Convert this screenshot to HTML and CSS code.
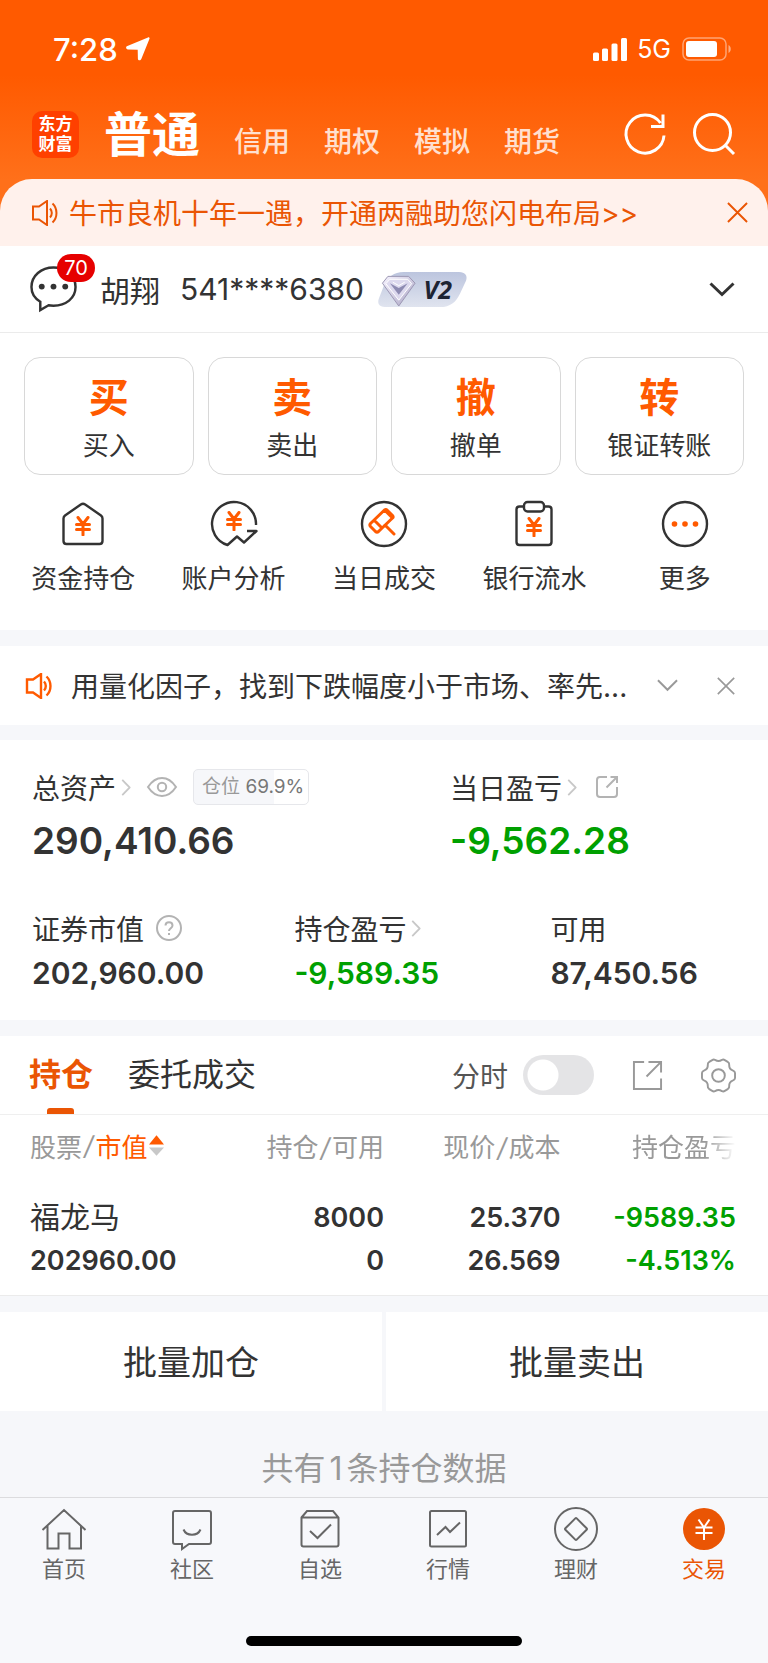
FILE: index.html
```html
<!DOCTYPE html>
<html lang="zh-CN">
<head>
<meta charset="utf-8">
<meta name="viewport" content="width=device-width, initial-scale=1">
<title>交易</title>
<link rel="stylesheet" href="styles.css">
</head>
<body>
<svg class="sprite" aria-hidden="true">
  <symbol id="yen" viewBox="0 0 16 20"><path d="M3 1.500 8 8l5-6.500M8 8v11M1.500 8.500h13M1.500 13.500h13"/></symbol>
  <symbol id="speaker" viewBox="0 0 28 26"><path d="M2 6.500h6L16 1v24L8 19.500H2z"/><path d="M19 8.500c2.400 2.500 2.400 6.500 0 9M21.500 3.500c5.300 5 5.300 14 0 19"/></symbol>
  <symbol id="cross" viewBox="0 0 22 22"><path d="m1 1 20 20M21 1 1 21"/></symbol>
  <symbol id="angle" viewBox="0 0 10 18"><path d="m1 1 8 8-8 8"/></symbol>
</svg>

<header class="top">
  <div class="status">
    <span class="status-time">7:28</span>
    <svg class="status-loc" viewBox="0 0 24 24"><path d="M22 .4c1-.4 1.800.4 1.500 1.400L15.300 22c-.8 2-3.300 1.700-3.400-.3l-.2-9L1.900 12.400c-2-.1-2.500-2.500-.5-3.300z" fill="#fff"/></svg>
    <svg class="status-signal" viewBox="0 0 34 23"><g fill="#fff"><rect x="0" y="14.500" width="6" height="8.500" rx="1.500"/><rect x="9" y="10.500" width="6" height="12.500" rx="1.500"/><rect x="18.500" y="5.500" width="6" height="17.500" rx="1.500"/><rect x="28" y="0" width="6" height="23" rx="1.500"/></g></svg>
    <span class="status-net">5G</span>
    <svg class="status-battery" viewBox="0 0 50 24"><rect x="1" y="1" width="43" height="22" rx="6" fill="none" stroke="#fff" stroke-opacity=".45" stroke-width="1.500"/><rect x="4" y="4" width="31" height="16" rx="3" fill="#fff"/><path d="M46.500 8c3 1.500 3 6.500 0 8z" fill="#fff" fill-opacity=".5"/></svg>
  </div>
  <div class="head">
    <a class="logo" href="#"><span>东方</span><span>财富</span></a>
    <nav class="modes">
      <a class="mode mode-on" href="#">普通</a>
      <a class="mode" href="#">信用</a>
      <a class="mode" href="#">期权</a>
      <a class="mode" href="#">模拟</a>
      <a class="mode" href="#">期货</a>
    </nav>
    <div class="head-tools">
      <button class="bare" aria-label="刷新"><svg class="i-head" viewBox="0 0 42 42"><path d="M36.500 10A19 19 0 1 0 40 22.500M39 1.500v12H27"/></svg></button>
      <button class="bare" aria-label="搜索"><svg class="i-head" viewBox="0 0 42 42"><circle cx="19.500" cy="19.500" r="18"/><path d="m32 32 9 9"/></svg></button>
    </div>
  </div>
</header>

<section class="banner">
  <svg class="i-speaker" viewBox="0 0 28 26"><use href="#speaker"/></svg>
  <a class="banner-text" href="#">牛市良机十年一遇，开通两融助您闪电布局&gt;&gt;</a>
  <button class="bare" aria-label="关闭"><svg class="i-close" viewBox="0 0 22 22"><use href="#cross"/></svg></button>
</section>

<section class="account">
  <button class="bare chat" aria-label="消息">
    <svg class="i-chat" viewBox="0 0 48 48"><path d="M10.500 36.500C4.500 33 1.500 27.500 1.500 21.500 1.500 10 11.500 1.500 24 1.500S46.500 10 46.500 21.500 36.500 40.500 24 40.500c-1.800 0-3.500 0-5-.4L10.500 45z" fill="none" stroke="#333" stroke-width="2.500"/><g fill="#333"><circle cx="12" cy="21" r="3"/><circle cx="24" cy="21" r="3"/><circle cx="36" cy="21" r="3"/></g></svg>
    <span class="chat-count">70</span>
  </button>
  <span class="account-name">胡翔</span>
  <span class="account-no">541****6380</span>
  <span class="vip">
    <svg class="vip-bg" viewBox="0 0 90 36" preserveAspectRatio="none"><defs><linearGradient id="vg" x1="0" y1="0" x2="0" y2="1"><stop offset="0" stop-color="#bcc5de"/><stop offset="1" stop-color="#e0e4ef"/></linearGradient><linearGradient id="dg" x1="0" y1="0" x2="1" y2="1"><stop offset="0" stop-color="#f7f4ff"/><stop offset="1" stop-color="#aaa4c4"/></linearGradient></defs><path d="M26 0h56c6 0 9 4 7 9l-6 13c-4 9-10 14-20 14H7c-6 0-8-4-6-9l5-13C10 5 16 0 26 0z" fill="url(#vg)"/><path d="M10 4.500h21l6.500 7L21 35 4.500 11.500z" fill="url(#dg)" stroke="#9b96b2"/><path d="M12 7.500h18l4 4.500-13 17-13-17z" fill="#ddd9ee" stroke="#fff"/><path d="m12 11.500 9 5 9-5-9 12z" fill="#8e8bb2"/><path d="m15 10.500 6 3.500 6-3.500" fill="none" stroke="#fff"/></svg>
    <span class="vip-text">V2</span>
  </span>
  <button class="bare account-more" aria-label="展开"><svg class="i-down" viewBox="0 0 26 15"><path d="m1.500 1.500 11.500 11 11.500-11" fill="none" stroke="#333" stroke-width="3"/></svg></button>
</section>

<section class="actions">
  <button class="act"><strong>买</strong><span>买入</span></button>
  <button class="act"><strong>卖</strong><span>卖出</span></button>
  <button class="act"><strong>撤</strong><span>撤单</span></button>
  <button class="act"><strong>转</strong><span>银证转账</span></button>
</section>

<nav class="tools">
  <a class="tool" href="#"><svg class="i-tool" viewBox="0 0 48 48"><path d="M21.800 4.500q2.200-1.500 4.400 0L42 15.500q1.500 1.200 1.500 3V41q0 3-3 3h-33q-3 0-3-3V18.500q0-1.800 1.500-3z"/><use class="hot" href="#yen" x="16" y="16" width="16" height="20"/></svg>资金持仓</a>
  <a class="tool" href="#"><svg class="i-tool" viewBox="0 0 48 48"><path d="M46 25A22 22 0 1 0 17.500 45L27 36.500l7 6L46.500 31H37"/><use class="hot" href="#yen" x="16" y="11" width="16" height="20"/></svg>账户分析</a>
  <a class="tool" href="#"><svg class="i-tool" viewBox="0 0 48 48"><circle cx="24" cy="24" r="22"/><g class="hot"><path d="M10.500 23.500 24.500 10l8 8-14 13.500q-1.500 1.300-3 0l-5-5q-1.300-1.500 0-3zM24.500 10q1.500-1 3 .5l5 5q1.200 1.500 0 2.500M14 20l8 8M25 25l9 9"/></g></svg>当日成交</a>
  <a class="tool" href="#"><svg class="i-tool" viewBox="0 0 48 48"><path d="M14 6.500H9.500q-3 0-3 3V42q0 3 3 3h29q3 0 3-3V9.500q0-3-3-3H34"/><rect x="14" y="2" width="20" height="9.500" rx="3.500"/><use class="hot" href="#yen" x="16" y="17" width="16" height="20"/></svg>银行流水</a>
  <a class="tool" href="#"><svg class="i-tool" viewBox="0 0 48 48"><circle cx="24" cy="24" r="22"/><g fill="#ff5a00" stroke="none"><circle cx="13.500" cy="24" r="2.800"/><circle cx="24" cy="24" r="2.800"/><circle cx="34.500" cy="24" r="2.800"/></g></svg>更多</a>
</nav>

<section class="notice">
  <svg class="i-speaker" viewBox="0 0 28 26"><use href="#speaker"/></svg>
  <a class="notice-text" href="#">用量化因子，找到下跌幅度小于市场、率先...</a>
  <button class="bare" aria-label="展开"><svg class="i-drop" viewBox="0 0 22 13"><path d="m1 1 10 10L21 1"/></svg></button>
  <button class="bare" aria-label="关闭"><svg class="i-shut" viewBox="0 0 22 22"><use href="#cross"/></svg></button>
</section>

<section class="assets">
  <div class="asset-row asset-main">
    <div>
      <div class="label">总资产<svg class="i-angle" viewBox="0 0 10 18"><use href="#angle"/></svg>
        <svg class="i-eye" viewBox="0 0 30 20"><path d="M1 10C5 4 9.500 1 15 1s10 3 14 9c-4 6-8.500 9-14 9S5 16 1 10z"/><circle cx="15" cy="10" r="4.200"/></svg>
        <span class="ratio">仓位 <b>69.9%</b></span></div>
      <div class="figure">290,410.66</div>
    </div>
    <div>
      <div class="label">当日盈亏<svg class="i-angle" viewBox="0 0 10 18"><use href="#angle"/></svg>
        <svg class="i-share" viewBox="0 0 24 24"><path d="M12 2H5Q2 2 2 5v14q0 3 3 3h14q3 0 3-3v-7M15.500 2H22v6M22 2 11.500 12.500"/></svg></div>
      <div class="figure down">-9,562.28</div>
    </div>
  </div>
  <div class="asset-row asset-sub">
    <div>
      <div class="label">证券市值<svg class="i-help" viewBox="0 0 26 26"><circle cx="13" cy="13" r="12"/><path d="M9.500 10.500c0-4.500 7-4.500 7 0 0 2.500-3.500 3-3.500 5.500M13 18v2"/></svg></div>
      <div class="figure">202,960.00</div>
    </div>
    <div>
      <div class="label">持仓盈亏<svg class="i-angle" viewBox="0 0 10 18"><use href="#angle"/></svg></div>
      <div class="figure down">-9,589.35</div>
    </div>
    <div>
      <div class="label">可用</div>
      <div class="figure">87,450.56</div>
    </div>
  </div>
</section>

<section class="holdings">
  <div class="tabs">
    <a class="tab tab-on" href="#">持仓</a>
    <a class="tab" href="#">委托成交</a>
    <label class="timeshare">分时<input class="switch" type="checkbox" role="switch"></label>
    <button class="bare" aria-label="分享"><svg class="i-export" viewBox="0 0 32 32"><path d="M12.500 2H2v28h28V19M17 2h13v11M30 2 15 17"/></svg></button>
    <button class="bare" aria-label="设置"><svg class="i-gear" viewBox="0 0 36 36"><path d="M11.500 2.200Q13 1 14.500 2Q18 4.200 21.500 2Q23 1 24.500 2.200L27.500 4Q29.300 5 29 7Q28.800 11.500 32.500 12.800Q35 13.800 35 15.500V20.500Q35 22.200 32.500 23.200Q28.800 24.500 29 29Q29.300 31 27.500 32L24.500 33.800Q23 35 21.500 34Q18 31.800 14.500 34Q13 35 11.500 33.800L8.500 32Q6.700 31 7 29Q7.200 24.500 3.500 23.200Q1 22.200 1 20.500V15.500Q1 13.800 3.500 12.800Q7.200 11.500 7 7Q6.700 5 8.500 4z"/><circle cx="18" cy="18" r="6.500"/></svg></button>
  </div>
  <table class="table">
    <thead>
      <tr>
        <th scope="col"><span class="sort">股票<i>/</i><em>市值</em><svg class="i-sort" viewBox="0 0 16 22"><path d="M8 0l8 10H0z" fill="#ff5a00"/><path d="M8 22l8-9H0z" fill="#c8c8c8"/></svg></span></th>
        <th scope="col">持仓<i>/</i>可用</th>
        <th scope="col">现价<i>/</i>成本</th>
        <th scope="col"><span class="fade">持仓盈亏</span></th>
      </tr>
    </thead>
    <tbody>
      <tr>
        <td><span class="stock">福龙马</span><span>202960.00</span></td>
        <td><span>8000</span><span>0</span></td>
        <td><span>25.370</span><span>26.569</span></td>
        <td class="down"><span>-9589.35</span><span>-4.513%</span></td>
      </tr>
    </tbody>
  </table>
</section>

<div class="batch">
  <button class="batch-btn">批量加仓</button>
  <button class="batch-btn">批量卖出</button>
</div>
<p class="summary">共有<span class="count">1</span>条持仓数据</p>

<nav class="dock">
  <a class="dock-item" href="#"><svg class="i-dock" viewBox="0 0 46 46"><path d="M1.500 24 23 4l21.500 20M6.500 20v22.500H17.500V27.500h11v15H40V20"/></svg>首页</a>
  <a class="dock-item" href="#"><svg class="i-dock" viewBox="0 0 46 46"><path d="M6 5h34q2 0 2 2v29q0 2-2 2H20l-7 5v-5H6q-2 0-2-2V7q0-2 2-2zM14.500 23.500c3 7 14 7 17 0"/></svg>社区</a>
  <a class="dock-item" href="#"><svg class="i-dock" viewBox="0 0 46 46"><path d="M4.500 11.500 10 5h26l5.500 6.500V38.500q0 2-2 2h-33q-2 0-2-2zM4.500 11.500h37M13 25l7.500 7L34 18.500"/></svg>自选</a>
  <a class="dock-item" href="#"><svg class="i-dock" viewBox="0 0 46 46"><rect x="5" y="5" width="36" height="35.500" rx="1.500"/><path d="m12 29 8.500-8 4.500 5 10-9.500"/></svg>行情</a>
  <a class="dock-item" href="#"><svg class="i-dock" viewBox="0 0 46 46"><circle cx="23" cy="23" r="21"/><rect x="15" y="15" width="16" height="16" rx="1" transform="rotate(45 23 23)"/></svg>理财</a>
  <a class="dock-item dock-on" href="#"><svg class="i-dock" viewBox="0 0 46 46"><circle cx="23" cy="23" r="21" fill="#ea5504" stroke="none"/><path d="m17.500 13.500 5.500 8 5.500-8M23 21.500V34M14.500 21.500h17M14.500 27h17" stroke="#fff"/></svg>交易</a>
</nav>
<div class="home"><span class="home-bar"></span></div>
</body>
</html>
```

FILE: styles.css
```css
* { box-sizing: border-box; }

body {
  margin: 0;
  min-height: 100vh;
  display: flex;
  flex-direction: column;
  background: #f6f7fa;
  color: #333;
  font-family: "Inter", "Noto Sans CJK SC", sans-serif;
  font-size: 28px;
}

a { color: inherit; text-decoration: none; }
button { font: inherit; color: inherit; cursor: pointer; }
svg { display: block; flex: none; fill: none; overflow: visible; }
.sprite { position: absolute; width: 0; height: 0; }
.bare { display: block; padding: 0; border: 0; background: none; }
.down { color: #00a000; }

/* Header */
.top {
  height: 212px;
  margin-bottom: -33px;
  background: linear-gradient(#ff5a00 75px, #ff701a 180px);
  color: #fff;
}
.status { display: flex; align-items: center; height: 98px; padding: 0 36px 0 53px; }
.status-time { font-size: 31px; font-weight: 500; }
.status-loc { width: 24px; height: 24px; margin-left: 8px; margin-right: auto; }
.status-signal { width: 34px; height: 23px; }
.status-net { margin: 0 11px 0 10px; font-size: 25px; }
.status-battery { width: 50px; height: 24px; }

.head { display: flex; align-items: center; height: 72px; padding: 0 33px 0 32px; }
.logo {
  display: flex;
  flex-direction: column;
  align-items: center;
  justify-content: center;
  width: 47px;
  height: 47px;
  border-radius: 10px;
  background: #ff4000;
  font-size: 17px;
  font-weight: 700;
  line-height: 20px;
}
.modes { display: flex; align-items: baseline; gap: 34px; margin-left: 25px; margin-right: auto; padding-top: 8px; line-height: 72px; }
.mode { font-weight: 500; color: #ffe0d0; }
.mode-on { font-size: 48px; font-weight: 700; color: #fff; }
.head-tools { display: flex; gap: 27px; stroke: #fff; stroke-width: 3px; }
.i-head { width: 42px; height: 42px; }

/* Promotion strip */
.banner {
  display: flex;
  align-items: center;
  height: 67px;
  padding: 0 20px 0 31px;
  border-radius: 32px 32px 0 0;
  background: #fff1ec;
  color: #ea5504;
}
.i-speaker { width: 28px; height: 26px; stroke: currentColor; stroke-width: 2px; }
.banner-text { flex: 1; margin-left: 10px; padding-bottom: 2px; }
.i-close { width: 21px; height: 21px; stroke: #ea5504; stroke-width: 2px; }

/* Account */
.account {
  display: flex;
  align-items: center;
  height: 87px;
  padding: 0 33px 0 30px;
  border-bottom: 1px solid #ebebeb;
  background: #fff;
  font-size: 30px;
}
.chat { position: relative; }
.i-chat { width: 47px; height: 47px; }
.chat-count {
  position: absolute;
  left: 27px;
  top: -12px;
  width: 38px;
  border-radius: 14px;
  background: #e60000;
  color: #fff;
  font-size: 20px;
  line-height: 28px;
  text-align: center;
}
.account-name { margin-left: 23px; }
.account-no { margin-left: 20px; }
.vip { position: relative; display: flex; justify-content: flex-end; width: 89px; height: 35px; margin-left: 14px; padding-right: 15px; }
.vip-bg { position: absolute; inset: 0; width: 100%; height: 100%; }
.vip-text { position: relative; color: #1d2433; font-size: 25px; font-weight: 700; font-style: italic; line-height: 35px; font-family: "Noto Sans", sans-serif; }
.account-more { margin-left: auto; }
.i-down { width: 26px; height: 15px; }

/* Trading buttons */
.actions { display: grid; grid-template-columns: repeat(4, 1fr); gap: 14px; padding: 24px 24px 0; background: #fff; }
.act {
  display: flex;
  flex-direction: column;
  align-items: center;
  height: 118px;
  padding: 16px 0 0;
  border: 1px solid #d8d8d8;
  border-radius: 16px;
  background: #fff;
  font-size: 26px;
  line-height: 48px;
}
.act strong { color: #ff5a00; font-size: 40px; font-weight: 700; }

.tools { display: grid; grid-template-columns: repeat(5, 1fr); padding: 25px 8px 30px; background: #fff; }
.tool { display: flex; flex-direction: column; align-items: center; gap: 10px; font-size: 26px; line-height: 42px; }
.i-tool { width: 48px; height: 48px; stroke: #333; stroke-width: 2.4px; stroke-linejoin: round; }
.hot { stroke: #ff5a00; stroke-width: 3px; stroke-linecap: round; }

/* Notice */
.notice { display: flex; align-items: center; height: 79px; margin: 16px 0 15px; padding: 0 33px 0 25px; background: #fff; }
.notice .i-speaker { color: #ff5a00; stroke-width: 2.4px; }
.notice-text { flex: 1; margin-left: 18px; padding-bottom: 2px; overflow: hidden; white-space: nowrap; }
.i-drop, .i-shut { stroke: #999; stroke-width: 2px; }
.i-drop { width: 21px; height: 13px; }
.i-shut { width: 18px; height: 18px; margin-left: 39px; }

/* Assets */
.assets { padding: 23px 32px 26px; background: #fff; }
.asset-row { display: grid; }
.asset-main { grid-template-columns: 19fr 13fr; margin-bottom: 33px; }
.asset-sub { grid-template-columns: 41fr 40fr 29fr; }
.label { display: flex; align-items: center; height: 48px; stroke: #b3b3b3; stroke-width: 2px; }
.figure { font-weight: 600; font-size: 30px; line-height: 42px; }
.asset-main .figure { font-size: 37px; line-height: 60px; }
.i-angle { width: 10px; height: 17px; margin-left: 5px; stroke: #c8c8c8; }
.i-eye { width: 30px; height: 20px; margin-left: 16px; }
.i-share { width: 24px; height: 24px; margin-left: 18px; }
.i-help { width: 26px; height: 26px; margin-left: 12px; }
.ratio {
  margin-left: 16px;
  padding: 0 4px 0 8px;
  border: 1px solid #e6e7eb;
  border-radius: 5px;
  background: linear-gradient(90deg, #f6f7fa 70%, #fff 70%);
  color: #999;
  font-size: 19px;
  line-height: 34px;
}
.ratio b { color: #777; font-weight: 400; }

/* Holdings */
.holdings { margin-top: 16px; border-bottom: 1px solid #ebebeb; background: #fff; }
.tabs { display: flex; align-items: center; height: 79px; padding: 0 32px 0 29px; border-bottom: 1px solid #efefef; }
.tab { position: relative; font-size: 32px; line-height: 78px; margin-right: 35px; }
.tab-on { color: #ea5504; font-weight: 700; }
.tab-on::after {
  content: "";
  position: absolute;
  left: 50%;
  bottom: 0;
  width: 27px;
  height: 6px;
  margin-left: -14px;
  border-radius: 3px 3px 0 0;
  background: #ea5504;
}
.timeshare { display: flex; align-items: center; margin-left: auto; color: #555; }
.switch {
  appearance: none;
  width: 71px;
  height: 40px;
  margin: 0 38px 0 15px;
  border-radius: 20px;
  background: radial-gradient(circle at 20px 20px, #fff 15px, #e4e4e6 16px);
}
.i-export { width: 31px; height: 31px; stroke: #999; stroke-width: 2px; }
.i-gear { width: 35px; height: 35px; margin-left: 38px; stroke: #999; stroke-width: 2px; stroke-linejoin: round; }

.table { width: 100%; table-layout: fixed; border-collapse: collapse; }
.table th, .table td { padding: 0; text-align: right; }
.table th { height: 60px; color: #999; font-size: 26px; font-weight: 400; }
.table th:first-child, .table td:first-child { padding-left: 30px; text-align: left; }
.table th:last-child, .table td:last-child { padding-right: 32px; }
.table th:first-child { width: 27%; }
.table th:nth-child(2) { width: 23%; }
.table th:nth-child(3) { width: 23%; }
.table td { padding-top: 21px; padding-bottom: 13px; font-size: 27px; font-weight: 600; }
.table td span { display: block; line-height: 43px; }
.table .stock { font-size: 30px; font-weight: 400; }
.table i { margin: 0 2px; }
.table em { color: #ff5a00; font-style: normal; }
.sort { display: flex; align-items: center; }
.i-sort { width: 15px; height: 21px; margin-left: 2px; }
.fade { -webkit-mask-image: linear-gradient(90deg, #000 70%, transparent); mask-image: linear-gradient(90deg, #000 70%, transparent); }

.batch { display: grid; grid-template-columns: 1fr 1fr; gap: 4px; margin-top: 16px; }
.batch-btn { height: 99px; padding: 0 0 3px; border: 0; background: #fff; font-size: 34px; }
.summary { margin: 34px 0 4px; color: #999; font-size: 32px; line-height: 48px; text-align: center; }
.count { padding: 0 4px; }

/* Bottom navigation */
.dock { display: grid; grid-template-columns: repeat(6, 1fr); padding-top: 8px; border-top: 1px solid #dcdcde; background: #f7f8fb; color: #666; }
.dock-item { display: flex; flex-direction: column; align-items: center; font-size: 22px; line-height: 34px; }
.i-dock { width: 46px; height: 46px; stroke: #666; stroke-width: 2px; }
.dock-on { color: #ea5504; }
.home { display: flex; flex: 1; align-items: flex-end; justify-content: center; padding: 48px 0 17px; background: #f7f8fb; }
.home-bar { width: 36%; height: 10px; border-radius: 5px; background: #000; }
```
